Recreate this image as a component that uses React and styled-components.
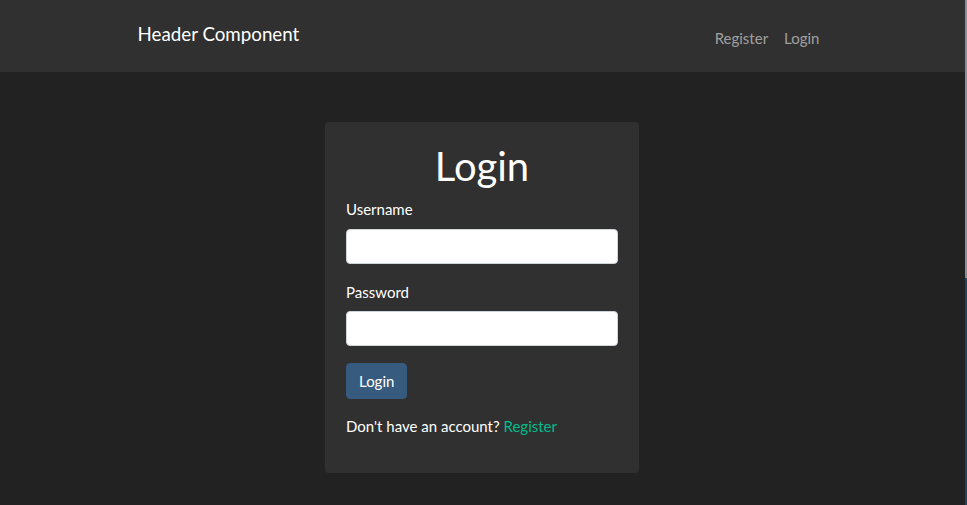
import React, { useState } from "react"
import styled, { createGlobalStyle } from "styled-components"

const GlobalStyle = createGlobalStyle`
  html, body {
    margin: 0;
    padding: 0;
    background: #222;
  }
  body {
    font-family: Lato, "Noto Sans", "Liberation Sans", sans-serif;
    font-size: 15px;
    line-height: 1.5;
    color: #fff;
  }
  * {
    box-sizing: border-box;
  }
`

const Shell = styled.div`
  display: flex;
  min-height: 100vh;
`

const Page = styled.div`
  flex: 1;
  min-width: 0;
`

// thin window edge on the right of the screenshot
const EdgeStrip = styled.div`
  width: 2px;
  flex-shrink: 0;
  background: linear-gradient(to bottom, #8a8f96 0, #8a8f96 278px, #1d4766 278px, #1d4766 100%);
`

const Header = styled.header`
  height: 72px;
  background: #303030;
`

const Container = styled.div`
  width: 720px;
  height: 100%;
  margin: 0 auto;
  padding: 0 14px 0 15px;
  display: flex;
  align-items: center;
  justify-content: space-between;
`

const Brand = styled.a`
  color: #fff;
  font-size: 18.75px;
  line-height: 28px;
  text-decoration: none;
  padding-bottom: 4px;
`

const Nav = styled.nav`
  display: flex;
  padding-top: 4px;
`

const NavLink = styled.a`
  color: rgba(255, 255, 255, 0.55);
  text-decoration: none;
  padding: 8px;

  &:last-child {
    padding-right: 9px;
  }
`

const Main = styled.main`
  display: flex;
  justify-content: center;
  padding: 50px 1px 0 0;
`

const Card = styled.div`
  width: 314px;
  padding: 20px 21px;
  background: #303030;
  border-radius: 4px;
`

const Title = styled.h1`
  margin: 0 0 8px;
  font-size: 40px;
  font-weight: 400;
  line-height: 48px;
  text-align: center;
`

const FormGroup = styled.div`
  margin-bottom: 17px;
`

const Label = styled.label`
  display: block;
  margin-bottom: 8px;
`

const Input = styled.input`
  display: block;
  width: 100%;
  height: 35px;
  padding: 6px 12px;
  font: inherit;
  color: #444;
  background: #fff;
  border: 1px solid #ced4da;
  border-radius: 4px;
  outline: none;
`

const Button = styled.button`
  font: inherit;
  color: #fff;
  background: #375a7f;
  border: 1px solid #375a7f;
  border-radius: 4px;
  padding: 5.5px 12px;
  line-height: 22.5px;
  cursor: pointer;
`

const Footnote = styled.p`
  margin: 16px 0 16px;
`

const Link = styled.a`
  color: #00bc8c;
  text-decoration: none;
`

export default function App() {
  const [username, setUsername] = useState("")
  const [password, setPassword] = useState("")

  return (
    <>
      <GlobalStyle />
      <Shell>
        <Page>
          <Header>
            <Container>
              <Brand href="#">Header Component</Brand>
              <Nav>
                <NavLink href="#">Register</NavLink>
                <NavLink href="#">Login</NavLink>
              </Nav>
            </Container>
          </Header>
          <Main>
            <Card>
              <Title>Login</Title>
              <form onSubmit={(e) => e.preventDefault()}>
                <FormGroup>
                  <Label htmlFor="username">Username</Label>
                  <Input id="username" value={username} onChange={(e) => setUsername(e.target.value)} />
                </FormGroup>
                <FormGroup>
                  <Label htmlFor="password">Password</Label>
                  <Input
                    id="password"
                    type="password"
                    value={password}
                    onChange={(e) => setPassword(e.target.value)}
                  />
                </FormGroup>
                <Button type="submit">Login</Button>
              </form>
              <Footnote>
                Don't have an account? <Link href="#">Register</Link>
              </Footnote>
            </Card>
          </Main>
        </Page>
        <EdgeStrip />
      </Shell>
    </>
  )
}
